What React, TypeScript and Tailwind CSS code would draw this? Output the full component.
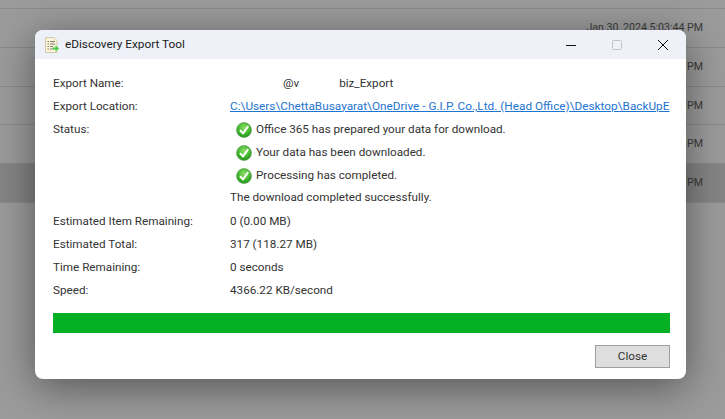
import type { ReactNode } from "react";

const bgRows = [
  { time: "Jan 30, 2024 5:03:44 PM", selected: false },
  { time: "Jan 30, 2024 5:03:12 PM", selected: false },
  { time: "Jan 30, 2024 5:02:51 PM", selected: false },
  { time: "Jan 30, 2024 5:02:39 PM", selected: false },
  { time: "Jan 30, 2024 5:02:17 PM", selected: true },
];

function CheckIcon() {
  return (
    <svg width="16" height="16" viewBox="0 0 16 16" className="shrink-0">
      <defs>
        <radialGradient id="ok" cx="50%" cy="35%" r="70%">
          <stop offset="0%" stopColor="#8fe06a" />
          <stop offset="60%" stopColor="#3fb52c" />
          <stop offset="100%" stopColor="#1f8a1c" />
        </radialGradient>
      </defs>
      <circle cx="8" cy="8" r="7.5" fill="url(#ok)" stroke="#5f9a58" strokeWidth="0.6" />
      <path d="M4 8.2 L7 11.4 L12.2 4.2" fill="none" stroke="#fff" strokeWidth="2" strokeLinejoin="round" />
    </svg>
  );
}

function ExportIcon() {
  return (
    <svg width="14" height="16" viewBox="0 0 14 16" className="shrink-0">
      <path d="M0.5 0.5 H9 L12 3.5 V15.5 H0.5 Z" fill="#fbf4d8" stroke="#cfc8ae" strokeWidth="1" />
      <path d="M2.5 4.5 H4 M5 4.5 H10 M2.5 7 H4 M5 7 H10 M2.5 9.5 H4 M5 9.5 H8 M2.5 12 H4 M5 12 H8" stroke="#77806a" strokeWidth="1" />
      <path d="M8 10.5 H10.5 V8.5 L14 11.5 L10.5 14.5 V12.5 H8 Z" fill="#3fce45" />
    </svg>
  );
}

function Row({ label, children }: { label: string; children: ReactNode }) {
  return (
    <div className="flex h-[23px] items-center">
      <div className="w-[177px] shrink-0 text-[#333]">{label}</div>
      <div className="min-w-0 flex-1 whitespace-nowrap text-[#333]">{children}</div>
    </div>
  );
}

function StatusLine({ text }: { text: string }) {
  return (
    <div className="flex h-[23px] items-center gap-[4px] pl-[6px] text-[#333]">
      <CheckIcon />
      <span>{text}</span>
    </div>
  );
}

export default function App() {
  return (
    <div
      className="relative h-[419px] w-[725px] overflow-hidden bg-[#9b9b9b] text-[11.7px]"
      style={{ fontFamily: 'Roboto, "Open Sans", sans-serif' }}
    >
      {/* page behind the dim */}
      <div className="pt-[8px]">
        {bgRows.map((r) => (
          <div
            key={r.time}
            className={`flex h-[38.8px] items-center justify-end border-t border-[#8a8a8a] pr-[22px] text-[10.6px] text-[#3a3a3a] ${
              r.selected ? "bg-[#858585]" : ""
            }`}
          >
            {r.time}
          </div>
        ))}
        <div className="border-t border-[#8a8a8a]" />
      </div>

      {/* dialog */}
      <div className="absolute left-[35px] top-[30px] flex h-[349px] w-[651px] flex-col overflow-hidden rounded-[8px] bg-white shadow-[0_8px_40px_rgba(0,0,0,0.45)]">
        <div className="flex h-[29px] items-center bg-[#eef1f8] pl-[10px]">
          <ExportIcon />
          <span className="ml-[6px] text-[11.8px] text-[#1a1a1a]">eDiscovery Export Tool</span>
          <div className="ml-auto flex items-center">
            <svg width="12" height="12" viewBox="0 0 12 12" className="mr-[34px]">
              <path d="M1 6.5 H11" stroke="#111" strokeWidth="1" />
            </svg>
            <svg width="12" height="12" viewBox="0 0 12 12" className="mr-[34px]">
              <rect x="1.5" y="1.5" width="9" height="9" rx="1" fill="none" stroke="#c4c4c4" strokeWidth="1" />
            </svg>
            <svg width="12" height="12" viewBox="0 0 12 12" className="mr-[17px]">
              <path d="M1 1 L11 11 M11 1 L1 11" stroke="#111" strokeWidth="1" />
            </svg>
          </div>
        </div>

        <div className="flex flex-1 flex-col pl-[18px] pr-[16px] pt-[13px]">
          <Row label="Export Name:">
            <span className="pl-[53px]">@v</span>
            <span className="pl-[40px]">biz_Export</span>
          </Row>
          <Row label="Export Location:">
            <span className="text-[11.8px] text-[#1f74d0] underline">
              C:\Users\ChettaBusayarat\OneDrive - G.I.P. Co.,Ltd. (Head Office)\Desktop\BackUpE
            </span>
          </Row>
          <Row label="Status:">
            <StatusLine text="Office 365 has prepared your data for download." />
          </Row>
          <div className="ml-[177px]">
            <StatusLine text="Your data has been downloaded." />
            <StatusLine text="Processing has completed." />
          </div>
          <div className="ml-[177px] flex h-[22px] items-center text-[#333]">The download completed successfully.</div>
          <div className="h-[1.5px]" />
          <Row label="Estimated Item Remaining:">0 (0.00 MB)</Row>
          <Row label="Estimated Total:">317 (118.27 MB)</Row>
          <Row label="Time Remaining:">0 seconds</Row>
          <Row label="Speed:">4366.22 KB/second</Row>

          <div className="mt-[10.5px] h-[20px] w-full bg-[#06b025]" />
          <div className="mt-[12px] flex justify-end">
            <button className="h-[23px] w-[75px] border border-[#a0a0a0] bg-[#dedede] text-[#333]">
              Close
            </button>
          </div>
        </div>
      </div>
    </div>
  );
}
